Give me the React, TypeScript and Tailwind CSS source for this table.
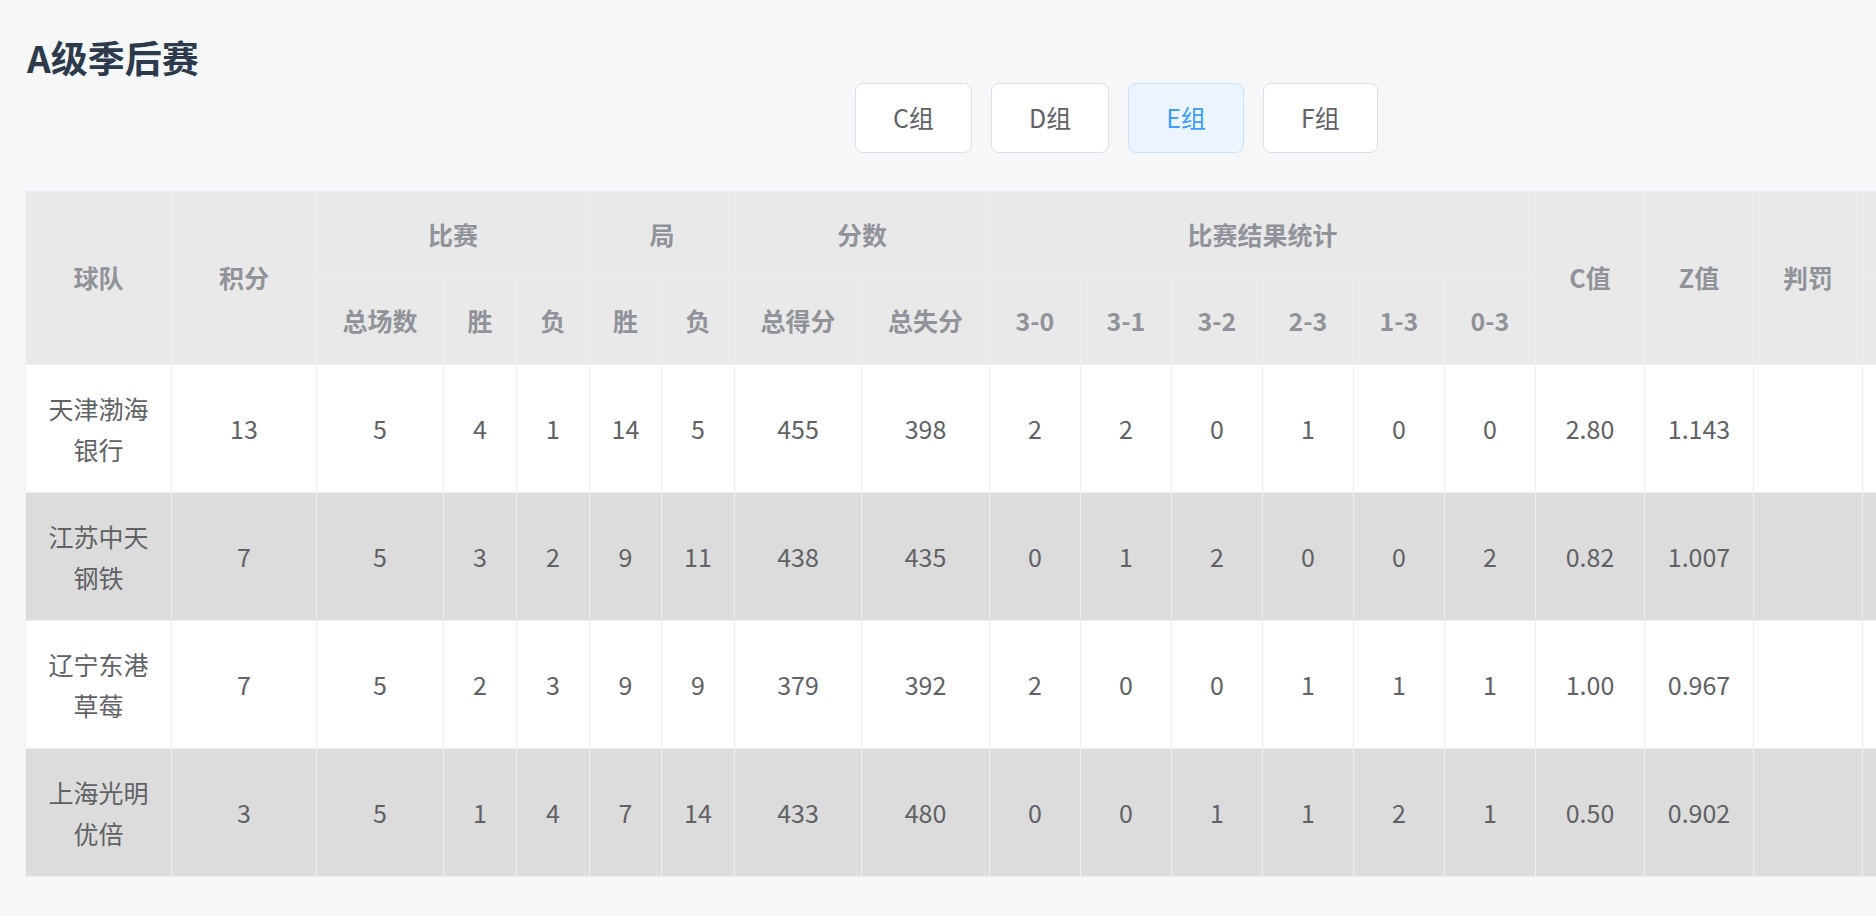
import React from "react";

const widths = [146, 145, 127, 73, 73, 72, 73, 127, 128, 91, 91, 91, 91, 91, 91, 109, 109, 109, 109, 109];

const rows: string[][] = [
  ["天津渤海银行", "13", "5", "4", "1", "14", "5", "455", "398", "2", "2", "0", "1", "0", "0", "2.80", "1.143", "", "", ""],
  ["江苏中天钢铁", "7", "5", "3", "2", "9", "11", "438", "435", "0", "1", "2", "0", "0", "2", "0.82", "1.007", "", "", ""],
  ["辽宁东港草莓", "7", "5", "2", "3", "9", "9", "379", "392", "2", "0", "0", "1", "1", "1", "1.00", "0.967", "", "", ""],
  ["上海光明优倍", "3", "5", "1", "4", "7", "14", "433", "480", "0", "0", "1", "1", "2", "1", "0.50", "0.902", "", "", ""],
];

const th = "border border-[#ebeef5] text-center align-middle font-bold text-[#909399] px-[15px]";
const td = "border border-[#ebeef5] text-center align-middle text-[#606266] px-[15px] leading-[41px]";

export default function App() {
  const groups = ["C组", "D组", "E组", "F组"];
  return (
    <div
      className="min-h-screen w-full overflow-hidden bg-[#f6f7f9]"
      style={{ fontFamily: '"Noto Sans CJK SC", "Noto Sans", sans-serif' }}
    >
      <div className="w-max pl-[25px] pt-[32px] pb-[20px]">
        <h1 className="ml-[2px] text-[37px] font-bold leading-[50px] text-[#2d3a4b]">A级季后赛</h1>
        <div className="ml-[830px] mt-[1px] flex gap-[19px]">
          {groups.map((g) => {
            const active = g === "E组";
            return (
              <button
                key={g}
                className={
                  active
                    ? "flex h-[70px] items-center rounded-[8px] border border-[#c6e2ff] bg-[#ecf5ff] px-[37px] text-[25px] text-[#409eff]"
                    : "flex h-[70px] items-center rounded-[8px] border border-[#dcdfe6] bg-white px-[37px] text-[25px] text-[#606266]"
                }
              >
                {g}
              </button>
            );
          })}
        </div>
        <table className="mt-[38px] table-fixed border-collapse text-[25px]">
          <colgroup>
            {widths.map((w, i) => (
              <col key={i} style={{ width: w }} />
            ))}
          </colgroup>
          <thead className="bg-[#e9e9e9]">
            <tr className="h-[86px]">
              <th rowSpan={2} className={th}>球队</th>
              <th rowSpan={2} className={th}>积分</th>
              <th colSpan={3} className={th}>比赛</th>
              <th colSpan={2} className={th}>局</th>
              <th colSpan={2} className={th}>分数</th>
              <th colSpan={6} className={th}>比赛结果统计</th>
              <th rowSpan={2} className={th}>C值</th>
              <th rowSpan={2} className={th}>Z值</th>
              <th rowSpan={2} className={th}>判罚</th>
              <th colSpan={2} className={th}></th>
            </tr>
            <tr className="h-[87px]">
              <th className={th}>总场数</th>
              <th className={th}>胜</th>
              <th className={th}>负</th>
              <th className={th}>胜</th>
              <th className={th}>负</th>
              <th className={th}>总得分</th>
              <th className={th}>总失分</th>
              <th className={th}>3-0</th>
              <th className={th}>3-1</th>
              <th className={th}>3-2</th>
              <th className={th}>2-3</th>
              <th className={th}>1-3</th>
              <th className={th}>0-3</th>
              <th className={th}></th>
              <th className={th}></th>
            </tr>
          </thead>
          <tbody>
            {rows.map((r, i) => (
              <tr key={i} className={i % 2 === 1 ? "h-[128px] bg-[#dcdcdc]" : "h-[128px] bg-white"}>
                {r.map((c, j) => (
                  <td key={j} className={td}>
                    {c}
                  </td>
                ))}
              </tr>
            ))}
          </tbody>
        </table>
      </div>
    </div>
  );
}
